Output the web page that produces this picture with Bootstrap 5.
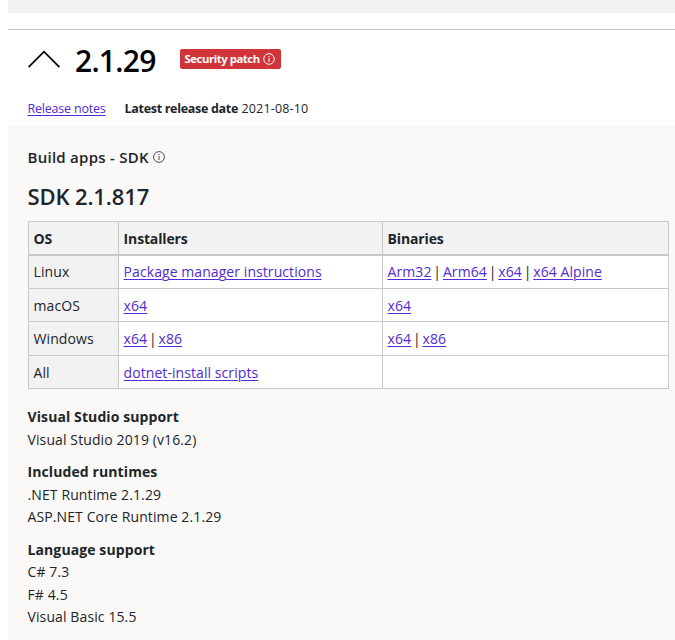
<!DOCTYPE html>
<html lang="en">
<head>
<meta charset="utf-8">
<meta name="viewport" content="width=device-width, initial-scale=1">
<title>.NET Core 2.1.29</title>
<link href="https://cdn.jsdelivr.net/npm/bootstrap@5.3.0/dist/css/bootstrap.min.css" rel="stylesheet">
<style>
body{font-family:"Segoe UI","Open Sans","Noto Sans",sans-serif;font-size:14px;line-height:22.5px;color:#212529;background:#fff;letter-spacing:.07px;overflow:hidden}
a{color:#512bd4;text-underline-offset:2px;text-decoration-thickness:1px}
b,th{font-weight:700;letter-spacing:-.15px}
.page{margin-left:8px;height:640px}
.top-band{height:13px;background:#f2f2f2;margin-bottom:16px}
.release{border-top:1px solid #c8c8c8;height:96px;padding-left:19.5px}
.release-head{height:62px}
.chevron{width:32px;height:18px;margin-top:-4px}
.version{font-size:30px;line-height:40px;font-weight:600;color:#000;margin-left:15.5px;width:105px;letter-spacing:-.75px}
.patch{background:#d13438;font-size:11.3px;line-height:20px;height:20px;width:101px;font-weight:700;border-radius:2px;padding:0 6px 1px 4.5px;margin-top:-4px;letter-spacing:-.42px;white-space:nowrap}
.meta{font-size:12.5px;line-height:20px;margin-top:7px}
.notes{width:97px;letter-spacing:-.2px}
.meta b{letter-spacing:-.3px}
.date{letter-spacing:.17px}
.sdk{background:#faf9f8;height:515px;padding:21px 6px 0 19.5px}
.sdk h3{font-size:15px;line-height:22px;font-weight:600;letter-spacing:.26px}
.sdk h2{font-size:22px;line-height:30px;font-weight:600;letter-spacing:-.12px;margin:13px 0 10px}
.downloads{width:641px;table-layout:fixed;border-collapse:collapse;margin:0 0 16.6px .5px}
.downloads th,.downloads td{border:1px solid #c8c8c8;padding:5.8px 5px 4.2px 4.6px;background:#fff}
.downloads thead th{border-bottom-width:2px;background:#f2f2f2;padding:5.5px 5px 3.5px 4.6px}
.downloads tbody td:first-child{background:#f2f2f2}
.c1{width:90px}.c2{width:264px}
.sep{margin:0 -1.9px}
.facts{margin-bottom:10px;letter-spacing:.11px}
.facts b{letter-spacing:.1px}
</style>
</head>
<body>
<main class="page">
  <div class="top-band"></div>
  <header class="release">
    <div class="release-head d-flex align-items-center">
      <svg class="chevron" viewBox="0 0 32 18" fill="none" stroke="#000" stroke-width="1.7"><path d="M.6 17.2 16 1.6l15.4 15.6"/></svg>
      <h1 class="version mb-0">2.1.29</h1>
      <span class="patch text-white d-flex align-items-center justify-content-between"><span>Security patch</span>
        <svg width="12" height="12" viewBox="0 0 12 12" fill="none" stroke="#fff"><circle cx="6" cy="6" r="5.3"/><path d="M6 5v4M6 3v1"/></svg></span>
    </div>
    <div class="meta d-flex"><div class="notes"><a href="#">Release notes</a></div><span class="date"><b>Latest release date</b> 2021-08-10</span></div>
  </header>
  <section class="sdk">
    <h3 class="mb-0 d-flex align-items-center gap-1"><span>Build apps - SDK</span>
      <svg width="12" height="12" viewBox="0 0 12 12" fill="none" stroke="#212529" stroke-width=".8"><circle cx="6" cy="6" r="5.4"/><path d="M6 5v4M6 3v1"/></svg></h3>
    <h2>SDK 2.1.817</h2>
    <table class="downloads">
      <colgroup><col class="c1"><col class="c2"><col></colgroup>
      <thead><tr><th>OS</th><th>Installers</th><th>Binaries</th></tr></thead>
      <tbody>
        <tr><td>Linux</td><td><a href="#">Package manager instructions</a></td><td><a href="#">Arm32</a> <span class="sep">|</span> <a href="#">Arm64</a> <span class="sep">|</span> <a href="#">x64</a> <span class="sep">|</span> <a href="#">x64 Alpine</a></td></tr>
        <tr><td>macOS</td><td><a href="#">x64</a></td><td><a href="#">x64</a></td></tr>
        <tr><td>Windows</td><td><a href="#">x64</a> <span class="sep">|</span> <a href="#">x86</a></td><td><a href="#">x64</a> <span class="sep">|</span> <a href="#">x86</a></td></tr>
        <tr><td>All</td><td><a href="#">dotnet-install scripts</a></td><td></td></tr>
      </tbody>
    </table>
    <div class="facts"><b>Visual Studio support</b><br>Visual Studio 2019 (v16.2)</div>
    <div class="facts"><b>Included runtimes</b><br>.NET Runtime 2.1.29<br>ASP.NET Core Runtime 2.1.29</div>
    <div class="facts"><b>Language support</b><br>C# 7.3<br>F# 4.5<br>Visual Basic 15.5</div>
  </section>
</main>
<script src="https://cdn.jsdelivr.net/npm/bootstrap@5.3.0/dist/js/bootstrap.bundle.min.js"></script>
</body>
</html>
